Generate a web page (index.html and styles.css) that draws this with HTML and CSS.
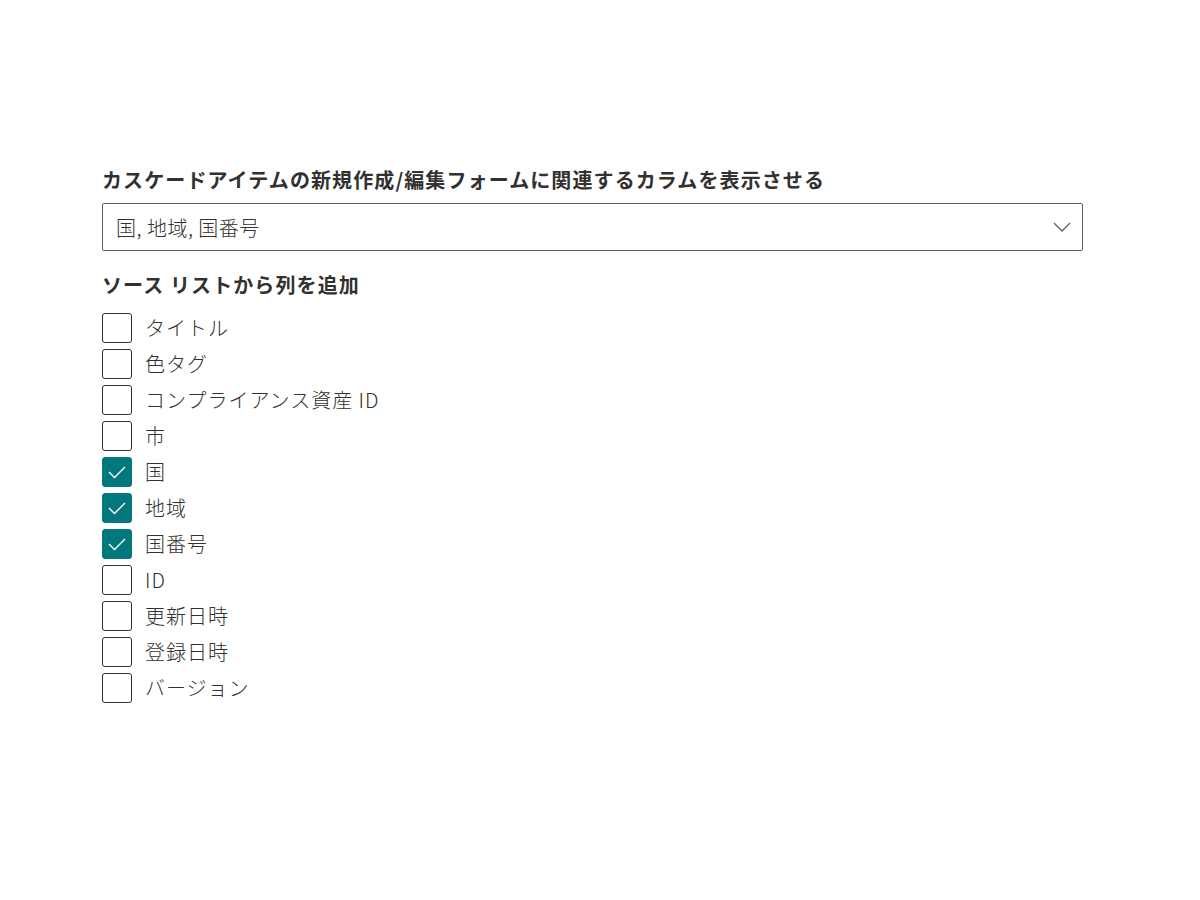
FILE: index.html
```html
<!DOCTYPE html>
<html lang="ja">
<head>
  <meta charset="UTF-8">
  <title>カスケード設定</title>
  <link rel="stylesheet" href="styles.css">
</head>
<body>

<div class="panel">
  <label class="field-label">カスケードアイテムの新規作成/編集フォームに関連するカラムを表示させる</label>
  <div class="dropdown">
    <span class="dropdown-text">国, 地域, 国番号</span>
    <svg class="chevron" width="18" height="10" viewBox="0 0 18 10">
      <path d="M1 1 L9 9 L17 1" fill="none" stroke="#605e5c" stroke-width="1.3"/>
    </svg>
  </div>

  <div class="section-label">ソース リストから列を追加</div>

  <ul class="checklist">
    <li class="check"><span class="box"></span><span class="text">タイトル</span></li>
    <li class="check"><span class="box"></span><span class="text">色タグ</span></li>
    <li class="check"><span class="box"></span><span class="text">コンプライアンス資産 ID</span></li>
    <li class="check"><span class="box"></span><span class="text">市</span></li>
    <li class="check on"><span class="box"><svg width="18" height="14" viewBox="0 0 18 14"><path d="M1 7 L6.5 12.5 L17 2" fill="none" stroke="#fff" stroke-width="1.4"/></svg></span><span class="text">国</span></li>
    <li class="check on"><span class="box"><svg width="18" height="14" viewBox="0 0 18 14"><path d="M1 7 L6.5 12.5 L17 2" fill="none" stroke="#fff" stroke-width="1.4"/></svg></span><span class="text">地域</span></li>
    <li class="check on"><span class="box"><svg width="18" height="14" viewBox="0 0 18 14"><path d="M1 7 L6.5 12.5 L17 2" fill="none" stroke="#fff" stroke-width="1.4"/></svg></span><span class="text">国番号</span></li>
    <li class="check"><span class="box"></span><span class="text">ID</span></li>
    <li class="check"><span class="box"></span><span class="text">更新日時</span></li>
    <li class="check"><span class="box"></span><span class="text">登録日時</span></li>
    <li class="check"><span class="box"></span><span class="text">バージョン</span></li>
  </ul>
</div>

</body>
</html>
```

FILE: styles.css
```css
body {
  margin: 0;
  background: #fff;
  font-family: "Noto Sans CJK JP", "Noto Sans", sans-serif;
  color: #323130;
}

.panel {
  width: 981px;
  padding: 165px 0 0 102px;
}

.field-label {
  display: block;
  font-size: 20px;
  font-weight: 700;
  line-height: 30px;
  letter-spacing: 1.1px;
}

.dropdown {
  margin-top: 8px;
  height: 46px;
  border: 1px solid #605e5c;
  border-radius: 2px;
  display: flex;
  align-items: center;
  justify-content: space-between;
  padding: 0 11px 0 13px;
}

.dropdown-text {
  font-size: 20px;
  font-weight: 300;
  letter-spacing: 0.5px;
}

.section-label {
  margin-top: 19px;
  font-size: 20px;
  font-weight: 700;
  line-height: 30px;
  letter-spacing: 1.1px;
}

.checklist {
  list-style: none;
  margin: 10px 0 0;
  padding: 0;
}

.check {
  display: flex;
  align-items: center;
  height: 36px;
}

.box {
  width: 28px;
  height: 28px;
  border: 1px solid #323130;
  border-radius: 3px;
  display: flex;
  align-items: center;
  justify-content: center;
  flex-shrink: 0;
}

.check.on .box {
  background: #03787c;
  border-color: #03787c;
}

.text {
  margin-left: 13px;
  font-size: 20px;
  font-weight: 300;
  line-height: 30px;
  letter-spacing: 1px;
}
```
